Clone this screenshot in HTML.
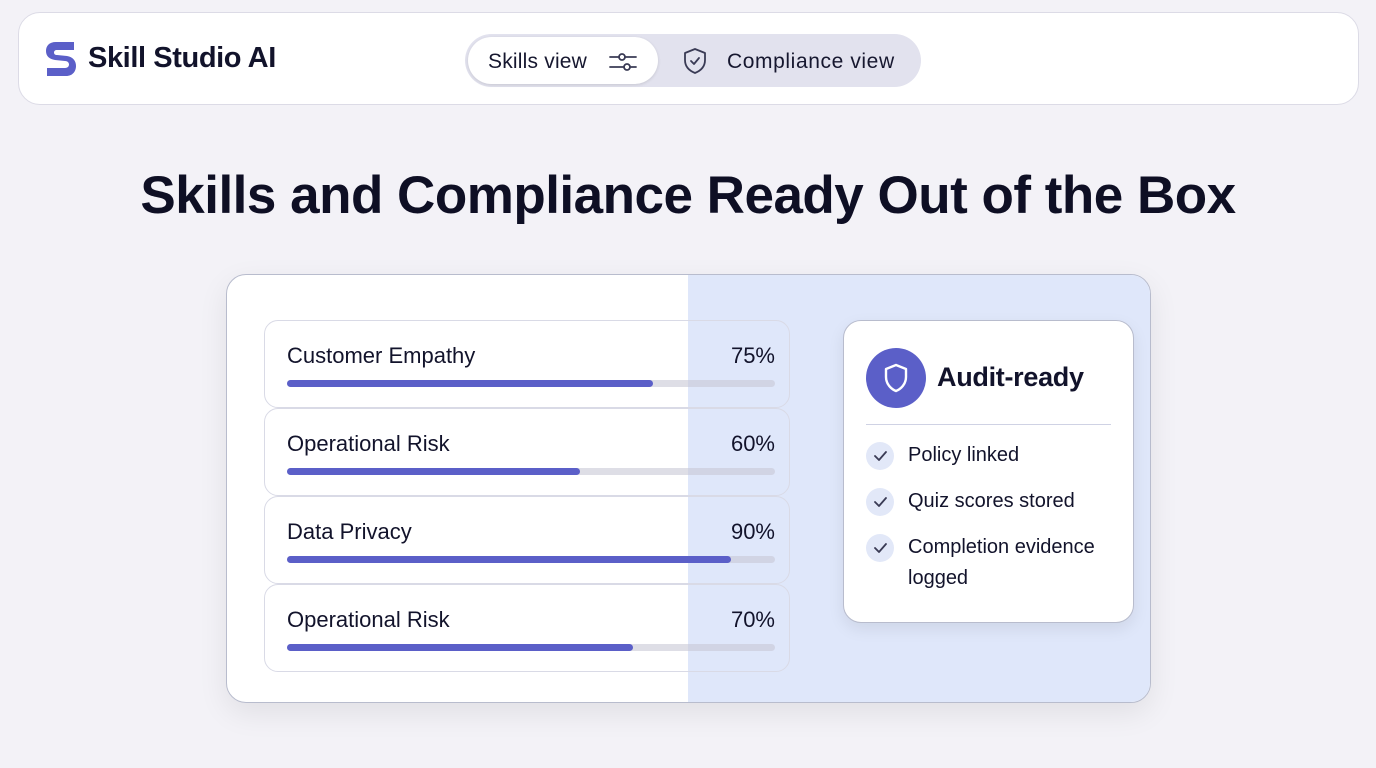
<!DOCTYPE html>
<html><head><meta charset="utf-8"><style>
*{margin:0;padding:0;box-sizing:border-box}
body{width:1376px;height:768px;background:#f3f2f7;font-family:"Liberation Sans",sans-serif;color:#12132b;position:relative;overflow:hidden}
.nav{position:absolute;left:18px;top:12px;width:1341px;height:93px;background:#fff;border:1px solid #dcdbe6;border-radius:22px}
.logo{position:absolute;left:44px;top:40px}
.brand{position:absolute;left:88px;top:42px;font-size:29px;font-weight:bold;letter-spacing:-0.4px;color:#12132b}
.seg{position:absolute;left:465px;top:34px;width:456px;height:53px;background:#e2e2ee;border-radius:27px}
.seg .on{position:absolute;left:3px;top:3px;width:190px;height:47px;background:#fff;border-radius:24px;box-shadow:0 1px 3px rgba(0,0,0,.12)}
.t{position:absolute;font-size:21px;color:#16172f;letter-spacing:.2px}
h1{position:absolute;left:0;width:1376px;top:165px;text-align:center;font-size:53px;font-weight:bold;letter-spacing:-0.5px;color:#0e0f24}
.panel{position:absolute;left:226px;top:274px;width:925px;height:429px;background:#fff;border:1px solid #b8bccd;border-radius:20px;overflow:hidden;box-shadow:0 10px 30px rgba(0,0,0,.08)}
.blue{position:absolute;left:461px;top:0;right:0;bottom:0;background:#dfe7fa}
.row{position:absolute;left:37px;width:526px;height:88px;border:1px solid #d9dae6;border-radius:14px}
.row .n{position:absolute;left:22px;top:22px;font-size:22px}
.row .p{position:absolute;right:14px;top:22px;font-size:22px}
.bar{position:absolute;left:22px;right:14px;top:59px;height:7px;background:rgba(200,200,214,.6);border-radius:4px}
.bar i{display:block;height:7px;background:#5b5fc8;border-radius:4px}
.card{position:absolute;left:843px;top:320px;width:291px;height:303px;background:#fff;border:1px solid #b8bccd;border-radius:18px;box-shadow:0 6px 16px rgba(0,0,0,.08)}
.circ{position:absolute;left:22px;top:27px;width:60px;height:60px;border-radius:50%;background:#5b5fc8}
.ar{position:absolute;left:93px;top:41px;font-size:27px;font-weight:bold;letter-spacing:-.3px}
.hr{position:absolute;left:22px;right:22px;top:103px;border-top:1px solid #cfd2e4}
.ck{position:absolute;left:22px;width:28px;height:28px;border-radius:50%;background:#e2e8f8}
.li{position:absolute;left:64px;font-size:20px;line-height:31px}
</style></head><body>
<div class="nav"></div>
<svg class="logo" width="34" height="38" viewBox="0 0 34 38"><path d="M30 2H12C5 2 2 6 2 11s3 8 9 9l10 1c3 0 4 2 4 3.5S24 28 21 28H3v8h19c7 0 10-5 10-10s-3-9-9-10l-10-1c-2 0-3-1-3-2.5S11 10 13 10h17z" fill="#5b5fc8"/></svg>
<div class="brand">Skill Studio AI</div>
<div class="seg"><div class="on"></div>
<div class="t" style="left:23px;top:16px">Skills view</div>
<svg style="position:absolute;left:143px;top:17px" width="30" height="22" viewBox="0 0 30 22" fill="none" stroke="#3a3b55" stroke-width="1.8" stroke-linecap="round"><path d="M2 6h9M17 6h11M2 16h14M22 16h6"/><circle cx="14" cy="6" r="3"/><circle cx="19" cy="16" r="3"/></svg>
<svg style="position:absolute;left:217px;top:13px" width="26" height="28" viewBox="0 0 26 28" fill="none" stroke="#3a3b55" stroke-width="1.8" stroke-linejoin="round" stroke-linecap="round"><path d="M13 2l10 4v7c0 7-5 11-10 13C8 24 3 20 3 13V6z"/><path d="M9 14l3 3 5-6"/></svg>
<div class="t" style="left:262px;top:16px;letter-spacing:.6px">Compliance view</div>
</div>
<h1>Skills and Compliance Ready Out of the Box</h1>
<div class="panel"><div class="blue"></div>
<div class="row" style="top:45px"><div class="n">Customer Empathy</div><div class="p">75%</div><div class="bar"><i style="width:75%"></i></div></div>
<div class="row" style="top:133px"><div class="n">Operational Risk</div><div class="p">60%</div><div class="bar"><i style="width:60%"></i></div></div>
<div class="row" style="top:221px"><div class="n">Data Privacy</div><div class="p">90%</div><div class="bar"><i style="width:91%"></i></div></div>
<div class="row" style="top:309px"><div class="n">Operational Risk</div><div class="p">70%</div><div class="bar"><i style="width:71%"></i></div></div>
</div>
<div class="card">
<div class="circ"><svg style="position:absolute;left:16px;top:14px" width="28" height="32" viewBox="0 0 28 32" fill="none" stroke="#fff" stroke-width="2.4" stroke-linejoin="round"><path d="M14 3l10 4v8c0 7-5 12-10 14C9 27 4 22 4 15V7z"/></svg></div>
<div class="ar">Audit-ready</div>
<div class="hr"></div>
<div class="ck" style="top:121px"></div><div class="li" style="top:119px">Policy linked</div>
<div class="ck" style="top:167px"></div><div class="li" style="top:165px">Quiz scores stored</div>
<div class="ck" style="top:213px"></div><div class="li" style="top:211px">Completion evidence<br>logged</div>
<svg style="position:absolute;left:22px;top:121px" width="28" height="120" viewBox="0 0 28 120" fill="none" stroke="#3a3b55" stroke-width="1.8" stroke-linecap="round" stroke-linejoin="round"><path d="M9 14l4 4 7-8M9 60l4 4 7-8M9 106l4 4 7-8"/></svg>
</div>
</body></html>
